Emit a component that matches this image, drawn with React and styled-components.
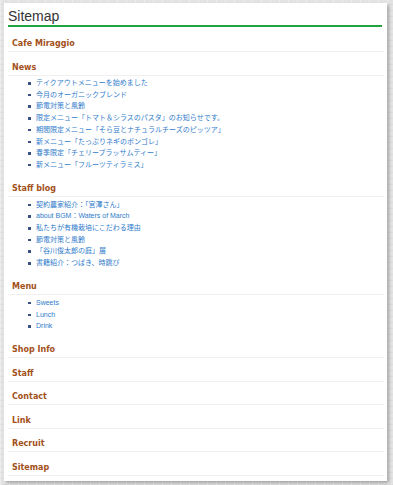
import React from "react";
import styled, { createGlobalStyle } from "styled-components";

const Global = createGlobalStyle`
  html, body { margin: 0; padding: 0; }
  body {
    background-color: #e3e3e3;
    background-image:
      repeating-linear-gradient(90deg, rgba(255,255,255,0.35) 0 1px, transparent 1px 9px),
      repeating-linear-gradient(0deg, rgba(0,0,0,0.03) 0 1px, transparent 1px 6px);
    font-family: "Liberation Sans", "Noto Sans CJK JP", sans-serif;
    height: 485px;
    overflow: hidden;
  }
`;

const Panel = styled.div`
  margin: 3px 0 0 4px;
  width: 383px;
  height: 478px;
  box-sizing: border-box;
  background: #fff;
  padding: 5px 5px 0 4px;
  box-shadow: 2px 2px 3px rgba(0, 0, 0, 0.28);
`;

const Title = styled.h1`
  margin: 0 0 11px;
  font-family: "Liberation Sans", sans-serif;
  font-weight: normal;
  font-size: 14px;
  line-height: 17px;
  color: #333;
  border-bottom: 2px solid #21a33f;
`;

const Section = styled.section`
  padding-bottom: 9.5px;
`;

const Heading = styled.h2`
  margin: 0 -2px 0 0;
  padding: 0 0 1px 4px;
  font-family: "DejaVu Sans", Verdana, sans-serif;
  font-weight: bold;
  font-size: 8px;
  line-height: 12px;
  color: #a3501a;
  border-bottom: 1px solid #f0f0f0;
`;

const List = styled.ul`
  margin: 1.5px 0 3px;
  padding: 0 0 0 20px;
  list-style: none;
`;

const Item = styled.li`
  position: relative;
  padding-left: 8px;
  font-family: "Liberation Sans", "Noto Sans CJK JP", sans-serif;
  font-size: 7px;
  line-height: 11.7px;
  color: #2f7bcb;
  white-space: nowrap;
  &::before {
    content: "";
    position: absolute;
    left: 0;
    top: 5px;
    width: 2.5px;
    height: 2.5px;
    background: #3a4f86;
  }
`;

const sections = [
  { title: "Cafe Miraggio" },
  {
    title: "News",
    items: [
      "テイクアウトメニューを始めました",
      "今月のオーガニックブレンド",
      "節電対策と風鈴",
      "限定メニュー「トマト＆シラスのパスタ」のお知らせです。",
      "期間限定メニュー「そら豆とナチュラルチーズのピッツア」",
      "新メニュー「たっぷりネギのボンゴレ」",
      "春季限定「チェリーブラッサムティー」",
      "新メニュー「フルーツティラミス」",
    ],
  },
  {
    title: "Staff blog",
    items: [
      "契約農家紹介：「宮澤さん」",
      "about BGM：Waters of March",
      "私たちが有機栽培にこだわる理由",
      "節電対策と風鈴",
      "「谷川俊太郎の庭」展",
      "書籍紹介：つばき、時跳び",
    ],
  },
  { title: "Menu", items: ["Sweets", "Lunch", "Drink"] },
  { title: "Shop Info" },
  { title: "Staff" },
  { title: "Contact" },
  { title: "Link" },
  { title: "Recruit" },
  { title: "Sitemap" },
];

export default function App() {
  return (
    <>
      <Global />
      <Panel>
        <Title>Sitemap</Title>
        {sections.map((s) => (
          <Section key={s.title}>
            <Heading>{s.title}</Heading>
            {s.items && (
              <List>
                {s.items.map((it, i) => (
                  <Item key={i}>{it}</Item>
                ))}
              </List>
            )}
          </Section>
        ))}
      </Panel>
    </>
  );
}
